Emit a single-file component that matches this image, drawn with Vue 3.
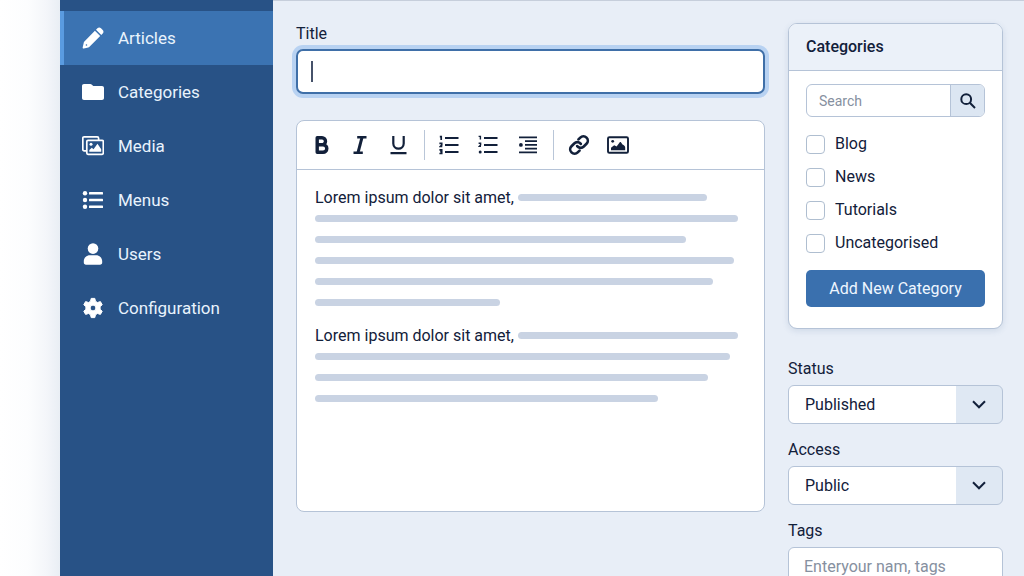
<script setup>
import { ref } from 'vue'

const menu = [
  { name: 'Articles', icon: 'pencil' },
  { name: 'Categories', icon: 'folder' },
  { name: 'Media', icon: 'media' },
  { name: 'Menus', icon: 'list' },
  { name: 'Users', icon: 'user' },
  { name: 'Configuration', icon: 'gear' },
]
const active = ref('Articles')

const categories = ['Blog', 'News', 'Tutorials', 'Uncategorised']
const checked = ref([])

const paragraphs = [
  { text: 'Lorem ipsum dolor sit amet,', first: 92.7, lines: [100, 87.7, 99, 94.1, 43.7] },
  { text: 'Lorem ipsum dolor sit amet,', first: 100, lines: [98.2, 92.8, 81.1] },
]

const title = ref('')
const search = ref('')
const status = ref('Published')
const access = ref('Public')
const tags = ref('')
</script>

<template>
  <div class="page">
    <nav class="sidebar" aria-label="Main">
      <a
        v-for="item in menu"
        :key="item.name"
        href="#"
        class="nav-item"
        :class="{ active: active === item.name }"
        @click.prevent="active = item.name"
      >
        <svg v-if="item.icon === 'pencil'" class="nav-icon" viewBox="0 0 22 22">
          <path fill-rule="evenodd" d="M12.900 3.800l5.300 5.300L7.500 19.800c-.4.4-.8.600-1.300.7l-4.300 1c-.9.200-1.400-.4-1.200-1.200l1-4.400c.1-.5.300-.9.700-1.300zM4.400 17.200a.8.8 0 1 0 .1 1.600.8.8 0 0 0-.1-1.600z" />
          <path d="M14 2.700l1.400-1.400c1.100-1.100 2.600-1 3.600 0l1.700 1.700c1 1 1.100 2.500 0 3.600L19.300 8z" />
        </svg>
        <svg v-else-if="item.icon === 'folder'" class="nav-icon" viewBox="0 0 22 22">
          <path d="M2 3h6.200c.7 0 1.200.3 1.700.8L11.300 5H20c1.200 0 2 .8 2 2v10c0 1.200-.8 2-2 2H2c-1.200 0-2-.8-2-2V5c0-1.200.8-2 2-2z" />
        </svg>
        <svg v-else-if="item.icon === 'media'" class="nav-icon" viewBox="0 0 22 22">
          <g fill="none" stroke="currentColor" stroke-width="1.700">
            <rect x="4.800" y="5.300" width="16.500" height="14" rx="1.200" />
            <path d="M4.800 15.800H2.200c-.8 0-1.400-.6-1.400-1.400V3.200c0-.8.6-1.400 1.400-1.400h13c.8 0 1.400.6 1.400 1.400v2" />
          </g>
          <circle cx="9" cy="9.300" r="1.500" />
          <path d="M7.300 16.800v-1.700l2.500-2.300 1.700 1.400 4-5.400 3.700 5.400v2.600z" />
        </svg>
        <svg v-else-if="item.icon === 'list'" class="nav-icon" viewBox="0 0 22 22">
          <circle cx="3" cy="4.200" r="2.200" />
          <circle cx="3" cy="11" r="2.200" />
          <circle cx="3" cy="17.800" r="2.200" />
          <rect x="7" y="2.900" width="14" height="2.600" rx=".6" />
          <rect x="7" y="9.700" width="14" height="2.600" rx=".6" />
          <rect x="7" y="16.500" width="14" height="2.600" rx=".6" />
        </svg>
        <svg v-else-if="item.icon === 'user'" class="nav-icon" viewBox="0 0 22 22">
          <circle cx="11" cy="5.600" r="5.300" />
          <path d="M8 12.300h6c3.500 0 6.200 2.600 6.200 6v1.200c0 1.300-.8 2.200-2.200 2.200H4c-1.400 0-2.200-.9-2.200-2.200v-1.200c0-3.400 2.700-6 6.200-6z" />
        </svg>
        <svg v-else class="nav-icon" viewBox="0 0 22 22">
          <path
            fill-rule="evenodd"
            d="M9.200 1.400h3.600l.7 2.900 2 1.200 2.900-.9 1.800 3.100-2.100 2.100v2.400l2.100 2.100-1.800 3.100-2.900-.9-2 1.200-.7 2.900H9.200l-.7-2.900-2-1.200-2.900.9-1.800-3.100 2.100-2.100V9.800L1.800 7.700l1.800-3.100 2.900.9 2-1.200zM11 8.100a2.900 2.900 0 1 0 0 5.800 2.900 2.900 0 0 0 0-5.800z"
            stroke="currentColor"
            stroke-width="1"
            stroke-linejoin="round"
          />
        </svg>
        <span>{{ item.name }}</span>
      </a>
    </nav>

    <div class="content">
      <main class="article">
        <label class="label" for="title">Title</label>
        <input id="title" v-model="title" class="title-input" :class="{ empty: !title }" type="text" />

        <section class="editor" aria-label="Article text">
          <div class="toolbar" role="toolbar" aria-label="Formatting">
            <div class="tools">
              <button type="button" class="tool" aria-label="Bold">
                <svg viewBox="0 0 22 22" stroke-width="3.400" stroke-linejoin="round">
                  <path d="M7.200 3.700h4.800a3.500 3.500 0 0 1 0 7H7.200zM7.200 10.700h5.800a3.800 3.800 0 0 1 0 7.600H7.200z" />
                </svg>
              </button>
              <button type="button" class="tool" aria-label="Italic">
                <svg viewBox="0 0 22 22" stroke-width="2.600">
                  <path d="M8.200 3.300h9.300M4.500 18.700h9.300" />
                  <path stroke-width="3" d="M13 3.300L9 18.700" />
                </svg>
              </button>
              <button type="button" class="tool" aria-label="Underline">
                <svg viewBox="0 0 22 22" stroke-width="2.200">
                  <path d="M5.300 2v7.500a5.200 5.200 0 0 0 10.400 0V2M2.500 19.200h16" />
                </svg>
              </button>
            </div>
            <span class="divider"></span>
            <div class="tools">
              <button type="button" class="tool" aria-label="Numbered list">
                <svg viewBox="0 0 22 22" stroke-width="2">
                  <path d="M6 4h13.500M6 11h13.500M6 18h13.500" />
                  <path stroke-width="1.700" d="M.8 2.600h1.400v3.400M.4 9.300h2.300v1.800l-1.200 1.300h1.800M.4 15.900h2.300v3.600H.4M1.200 17.700h1.500" />
                </svg>
              </button>
              <button type="button" class="tool" aria-label="Bulleted list">
                <svg viewBox="0 0 22 22" stroke-width="2">
                  <path d="M6 4h13.500M6 11h13.500M6 18h13.500" />
                  <path stroke-width="1.400" d="M.6 2.400h1.800v3.200M.6 9.300h2v1.600l-1.400 1.500h1.800" />
                  <circle cx="2.200" cy="18" r="1.500" fill="currentColor" stroke="none" />
                </svg>
              </button>
              <button type="button" class="tool" aria-label="Indent">
                <svg viewBox="0 0 22 22" stroke-width="1.900">
                  <path d="M2 3.400h18M8 7.100h12M8 10.900h12M8 14.600h12M2 18.400h18" />
                  <circle cx="3.900" cy="10.900" r="1.900" fill="currentColor" stroke="none" />
                </svg>
              </button>
            </div>
            <span class="divider"></span>
            <div class="tools">
              <button type="button" class="tool" aria-label="Link">
                <svg viewBox="0 0 24 24" stroke-width="2.900" stroke-linecap="round">
                  <path d="M10 13.200a4.800 4.800 0 0 0 7.200.5l3-3a4.800 4.800 0 0 0-6.800-6.800l-2 2" />
                  <path d="M14 10.800a4.800 4.800 0 0 0-7.200-.5l-3 3a4.800 4.800 0 0 0 6.800 6.800l2-2" />
                </svg>
              </button>
              <button type="button" class="tool" aria-label="Image">
                <svg viewBox="0 0 22 22" stroke-width="1.900">
                  <rect x="1" y="3.200" width="20" height="15.600" rx="1.400" />
                  <circle cx="5.700" cy="7.300" r="1.400" fill="currentColor" stroke="none" />
                  <path fill="currentColor" stroke="none" d="M4 16.300v-2.500l3.200-2.500 2.400 1.300 3-4.200c.4-.6 1-.6 1.500 0l1.400 2c1.400.4 2.700 1.700 2.700 3.200v2.700z" />
                </svg>
              </button>
            </div>
          </div>

          <div class="editor-body">
            <div v-for="(p, i) in paragraphs" :key="i" class="paragraph">
              <div class="line" :style="{ width: p.first + '%' }">
                <span>{{ p.text }}</span>
                <span class="bar grow"></span>
              </div>
              <div v-for="(w, j) in p.lines" :key="j" class="line">
                <span class="bar" :style="{ width: w + '%' }"></span>
              </div>
            </div>
          </div>
        </section>
      </main>

      <aside class="side">
        <section class="card">
          <h2 class="card-title">Categories</h2>
          <div class="card-body">
            <form class="search" @submit.prevent>
              <input v-model="search" type="search" placeholder="Search" aria-label="Search categories" />
              <button type="submit" aria-label="Search">
                <svg viewBox="0 0 16 16">
                  <circle cx="6.200" cy="6.200" r="4.900" />
                  <path d="M9.800 9.800l5.200 5.200" />
                </svg>
              </button>
            </form>
            <div class="checks">
              <label v-for="c in categories" :key="c" class="check">
                <input v-model="checked" type="checkbox" :value="c" />
                <span>{{ c }}</span>
              </label>
            </div>
            <button type="button" class="add">Add New Category</button>
          </div>
        </section>

        <div class="field">
          <label class="label" for="status">Status</label>
          <div class="select">
            <select id="status" v-model="status">
              <option>Published</option>
              <option>Unpublished</option>
            </select>
            <svg viewBox="0 0 14 9"><path d="M1 1.300l6 6 6-6" /></svg>
          </div>
        </div>
        <div class="field">
          <label class="label" for="access">Access</label>
          <div class="select">
            <select id="access" v-model="access">
              <option>Public</option>
              <option>Registered</option>
            </select>
            <svg viewBox="0 0 14 9"><path d="M1 1.300l6 6 6-6" /></svg>
          </div>
        </div>
        <div class="field">
          <label class="label" for="tags">Tags</label>
          <input id="tags" v-model="tags" class="tags" type="text" placeholder="Enteryour nam, tags" />
        </div>
      </aside>
    </div>
  </div>
</template>

<style>
html {
  scrollbar-width: none;
}
body {
  margin: 0;
}
</style>

<style scoped>
.page,
.page * {
  box-sizing: border-box;
}
.page {
  display: flex;
  min-height: 100vh;
  padding-left: 60px;
  background: linear-gradient(90deg, #ffffff 0, #fcfdfe 28px, #f4f6fa 46px, #e9eef4 60px);
  color: #12203a;
  font-family: Roboto, "Liberation Sans", sans-serif;
  font-size: 16px;
  line-height: 20px;
}
button,
input,
select {
  font: inherit;
  color: inherit;
  margin: 0;
}

.sidebar {
  flex: none;
  width: 213px;
  padding-top: 11px;
  background: #285286;
}
.nav-item {
  display: flex;
  align-items: center;
  gap: 14px;
  height: 54px;
  padding-left: 18px;
  border-left: 4px solid transparent;
  color: #e9f3fd;
  font-size: 17px;
  text-decoration: none;
}
.nav-item.active {
  background: #3b73b2;
  border-left-color: #5a9be0;
}
.nav-icon {
  width: 22px;
  height: 22px;
  fill: currentColor;
  color: #ffffff;
}

.content {
  flex: 1;
  min-width: 0;
  display: flex;
  align-items: flex-start;
  gap: 23px;
  padding: 22px 21px 0 23px;
  background: #e8eef7;
  border-top: 1px solid #c6cedb;
}
.article {
  flex: 1;
  min-width: 0;
}
.label {
  display: block;
  padding-top: 1px;
}
.title-input {
  display: block;
  width: 100%;
  height: 45px;
  margin-top: 5px;
  padding: 0 14px;
  border: 2px solid #3f6fa8;
  border-radius: 7px;
  outline: none;
  background: #ffffff;
  box-shadow: 0 0 0 4px #b8d2f2;
}
.title-input.empty {
  background: linear-gradient(#46526a, #46526a) 13px center / 2px 21px no-repeat #ffffff;
}

.editor {
  min-height: 392px;
  margin-top: 26px;
  border: 1px solid #b5c3d7;
  border-radius: 8px;
  background: #ffffff;
}
.toolbar {
  display: flex;
  align-items: center;
  gap: 10px;
  height: 49px;
  padding: 0 9px;
  border-bottom: 1px solid #b5c3d7;
}
.tools {
  display: flex;
  gap: 9px;
}
.tool {
  display: flex;
  align-items: center;
  justify-content: center;
  width: 30px;
  height: 30px;
  padding: 0;
  border: 0;
  background: none;
}
.tool svg {
  width: 22px;
  height: 22px;
  fill: none;
  stroke: currentColor;
}
.divider {
  width: 1px;
  height: 30px;
  background: #b9c6d8;
}
.editor-body {
  padding: 17px 26px 17px 18px;
}
.paragraph + .paragraph {
  margin-top: 12px;
}
.line {
  display: flex;
  align-items: center;
  gap: 4px;
  height: 21px;
  white-space: nowrap;
}
.bar {
  height: 7px;
  border-radius: 4px;
  background: #c9d3e3;
}
.grow {
  flex: 1;
}

.side {
  flex: none;
  width: 215px;
}
.card {
  border: 1px solid #b5c3d7;
  border-radius: 9px;
  background: #ffffff;
  box-shadow: 0 2px 6px rgba(60, 90, 140, 0.14);
}
.card-title {
  margin: 0;
  padding: 13px 17px;
  border-bottom: 1px solid #b5c3d7;
  border-radius: 8px 8px 0 0;
  background: #ebf1f9;
  font-size: 16px;
  font-weight: 500;
  line-height: 20px;
}
.card-body {
  padding: 13px 17px 21px;
}
.search {
  display: flex;
  height: 33px;
  border: 1px solid #b5c3d7;
  border-radius: 6px;
  overflow: hidden;
}
.search input {
  flex: 1;
  min-width: 0;
  padding: 0 12px;
  border: 0;
  outline: none;
  background: none;
  font-size: 14px;
  appearance: none;
}
.search button {
  display: flex;
  align-items: center;
  justify-content: center;
  width: 34px;
  padding: 0;
  border: 0;
  border-left: 1px solid #b5c3d7;
  background: #dce6f2;
}
.search svg {
  width: 16px;
  height: 16px;
  fill: none;
  stroke: currentColor;
  stroke-width: 2;
}
input::placeholder {
  color: #8690a0;
  opacity: 1;
}
.checks {
  display: grid;
  gap: 13px;
  margin: 17px 0;
}
.check {
  display: flex;
  align-items: center;
  gap: 10px;
}
.check input {
  width: 19px;
  height: 19px;
  appearance: none;
  border: 1px solid #afbed0;
  border-radius: 4px;
  background: #ffffff;
}
.check input:checked {
  background: #3a70ae;
}
.add {
  display: block;
  width: 100%;
  height: 37px;
  padding: 0;
  border: 0;
  border-radius: 5px;
  background: #3a70ae;
  color: #eef6ff;
}
.field {
  margin-top: 15px;
}
.card + .field {
  margin-top: 29px;
}
.select {
  position: relative;
  margin-top: 6px;
}
.select select {
  display: block;
  width: 100%;
  height: 39px;
  padding: 0 56px 0 16px;
  appearance: none;
  border: 1px solid #b5c3d7;
  border-radius: 6px;
  background: linear-gradient(#dfe8f3, #dfe8f3) right / 46px 100% no-repeat #ffffff;
}
.select svg {
  position: absolute;
  top: 15px;
  right: 17px;
  width: 14px;
  height: 9px;
  fill: none;
  stroke: currentColor;
  stroke-width: 2;
  pointer-events: none;
}
.tags {
  display: block;
  width: 100%;
  height: 39px;
  margin-top: 6px;
  padding: 0 15px;
  border: 1px solid #b5c3d7;
  border-radius: 6px;
  background: #ffffff;
}
</style>
